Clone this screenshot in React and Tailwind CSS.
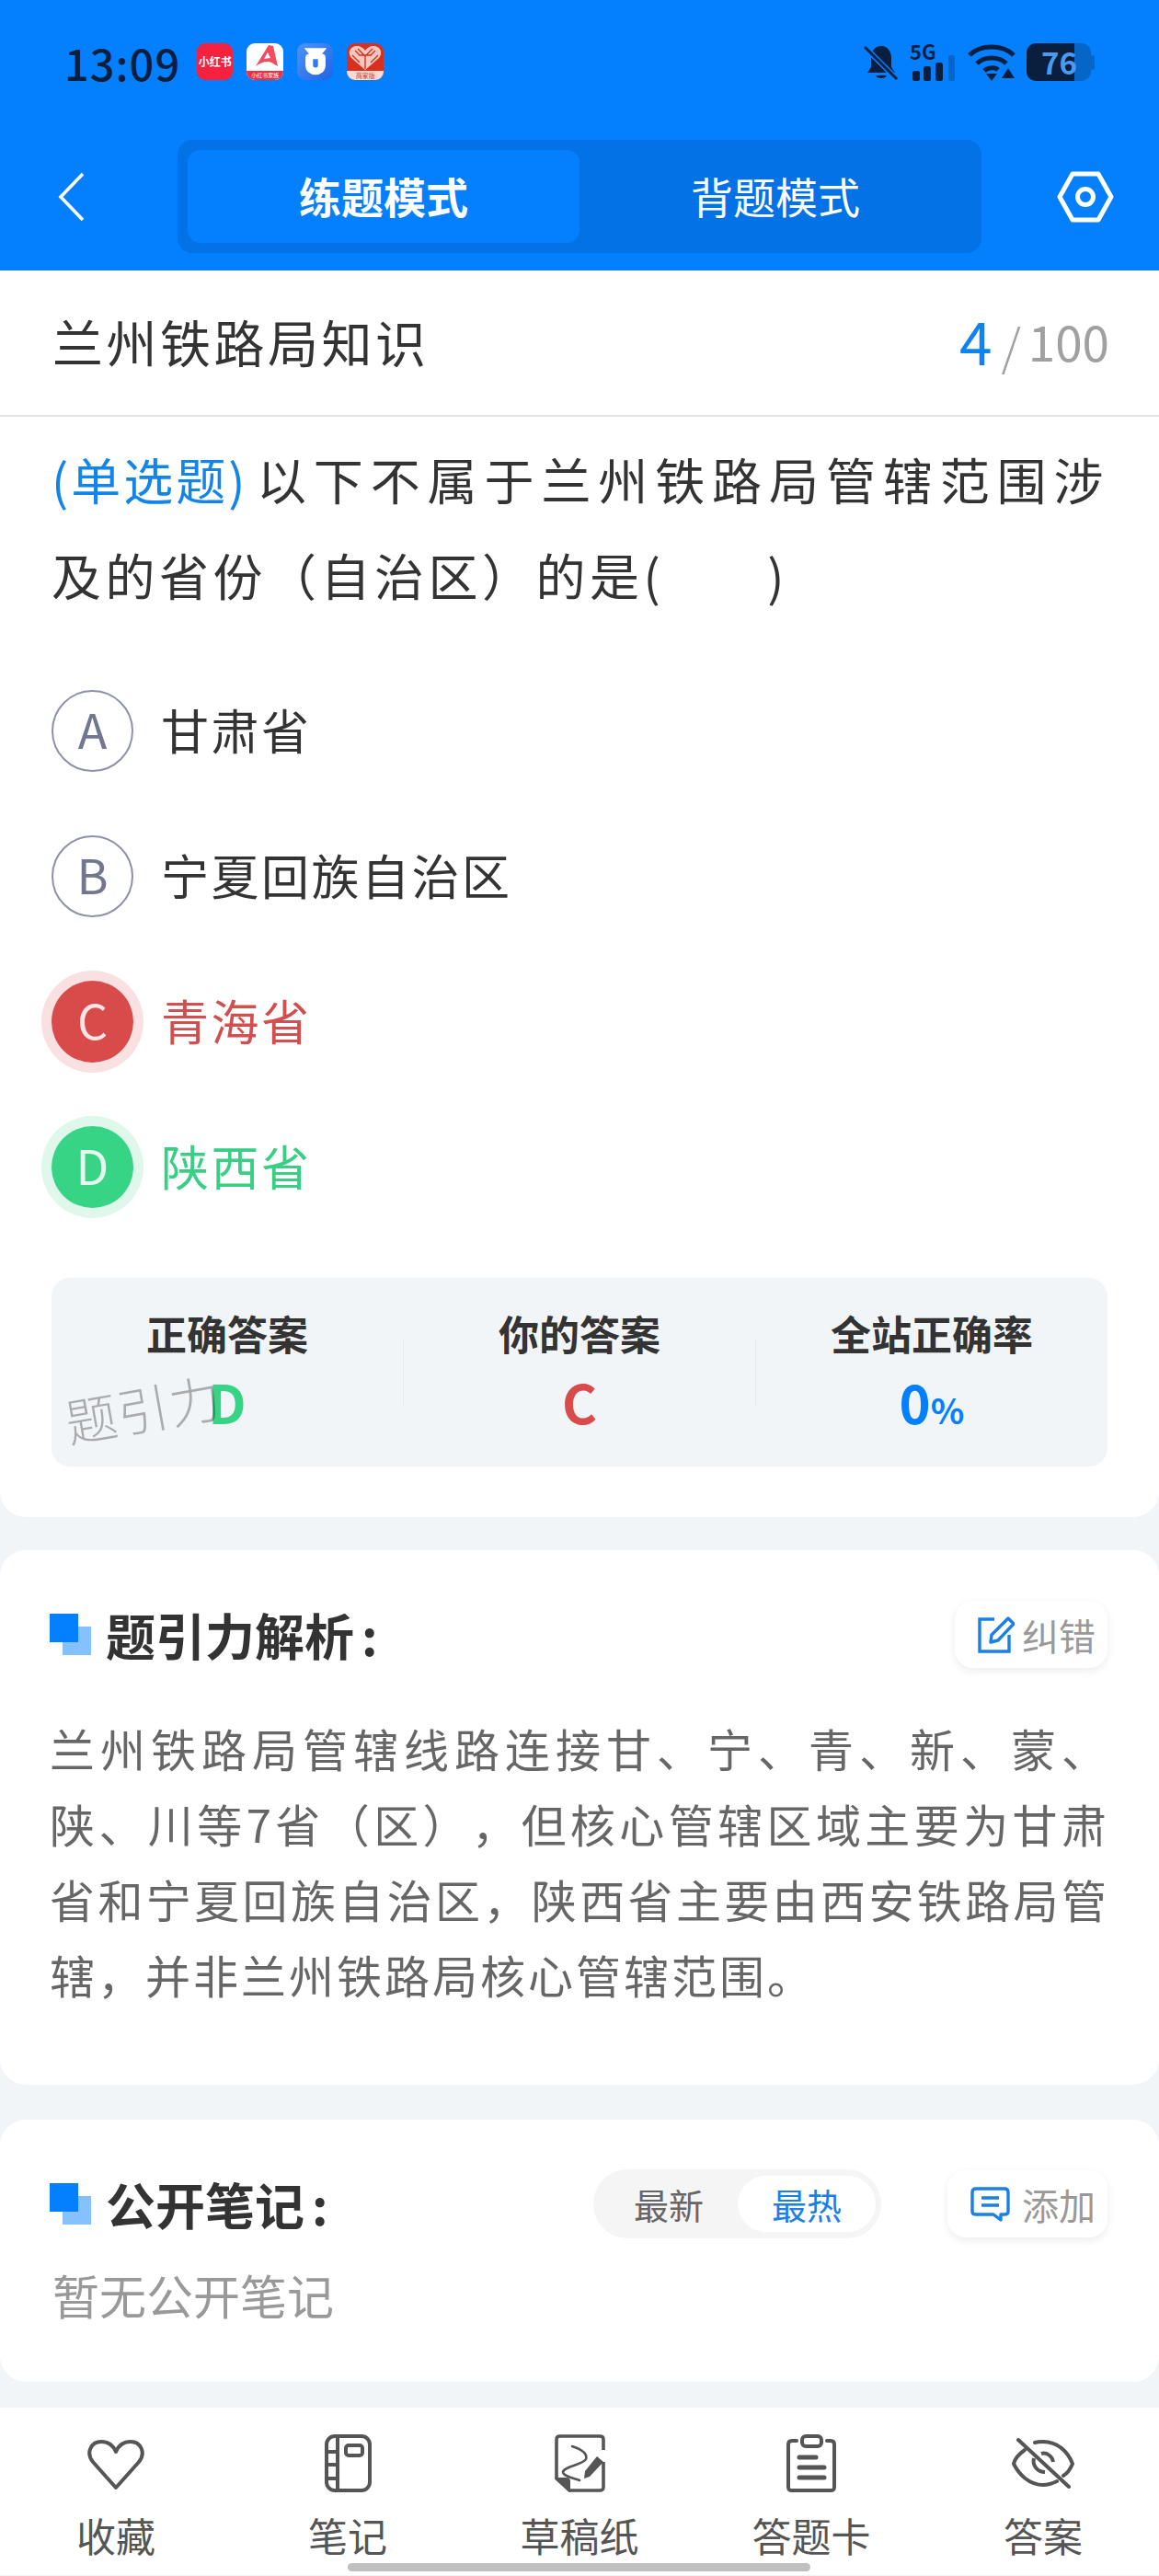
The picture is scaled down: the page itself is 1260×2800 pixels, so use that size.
import { clsx } from 'clsx';

const DARK = '#0a1f3d';

const AppIcons = () => (
  <div className="flex gap-[15px] ml-[18px]">
    <div className="w-[39px] h-[40px] rounded-[9px] bg-[#f5213f] flex items-center justify-center text-white text-[12px] font-bold leading-none whitespace-nowrap">
      小红书
    </div>
    <div className="w-[40px] h-[40px] rounded-[9px] bg-white overflow-hidden flex flex-col">
      <svg width="40" height="30" viewBox="0 0 40 30" className="block">
        <path d="M24 2 L10 25 C14 22 18 20 23 20 C27 20 30 23 34 25 L29 3 Z M23 10 L26 16 L19 17 Z" fill="#f04d5f" fillRule="evenodd" />
      </svg>
      <div className="flex-1 bg-[#ee2f45] text-white text-[6px] leading-[10px] text-center whitespace-nowrap">小红书家族</div>
    </div>
    <div className="w-[39px] h-[40px] rounded-[9px] bg-gradient-to-br from-[#4f93f5] to-[#1f63e6] flex items-center justify-center">
      <svg width="30" height="34" viewBox="0 0 26 30">
        <path d="M3 2 L7 7 H19 L23 2 M7 8 C4 8 4 10 4 13 V18 C4 24 8 27 13 27 C18 27 22 24 22 18 V13 C22 10 22 8 19 8 Z M10 12 V19 C10 22 16 22 16 19 V12 Z" fill="#fff" fillRule="evenodd" stroke="#fff" strokeWidth="1.2" />
      </svg>
    </div>
    <div className="w-[40px] h-[40px] rounded-[9px] bg-[#d8301f] overflow-hidden flex flex-col items-center">
      <svg width="40" height="30" viewBox="0 0 40 30" className="block">
        <path d="M20 29 L5 16 C0 10 4 3 11 3 C15 3 18 5 20 8 C22 5 25 3 29 3 C36 3 40 10 35 16 Z" fill="#f6c9c0" />
        <path d="M12 6 L20 14 L28 6 M6 13 L14 21 M34 13 L26 21 M20 14 V28 M13 13 H27 M9 8 L14 13 M31 8 L26 13" stroke="#d8301f" strokeWidth="1.4" fill="none" />
      </svg>
      <div className="flex-1 w-full bg-[#fbdcd5] text-[#d8301f] text-[7px] leading-[10px] text-center whitespace-nowrap">商家版</div>
    </div>
  </div>
);

const StatusRight = () => (
  <div className="flex items-center ml-auto mr-[70px] h-[41px]">
    <svg width="38" height="41" viewBox="0 0 38 41">
      <path d="M19 3 C26 3 30 9 30 16 V26 L34 32 H4 L8 26 V16 C8 9 12 3 19 3 Z" fill={DARK} />
      <path d="M13 35 H25 C24 39 14 39 13 35 Z" fill={DARK} />
      <path d="M2 5 L36 39" stroke="#0480ff" strokeWidth="6" />
      <path d="M1 4 L36 39" stroke={DARK} strokeWidth="3" />
    </svg>
    <div className="relative w-[50px] h-[41px] ml-[12px]">
      <span className="absolute left-0 top-[-7px] text-[22px] font-bold leading-[30px] text-[#0a1f3d]">5G</span>
      <svg width="50" height="41" viewBox="0 0 50 41" className="block">
        <rect x="3" y="30" width="8" height="11" rx="2.5" fill={DARK} />
        <rect x="15" y="25" width="8" height="16" rx="2.5" fill={DARK} />
        <rect x="28" y="21" width="8" height="20" rx="2.5" fill={DARK} />
        <rect x="42" y="13" width="7" height="28" rx="2.5" fill="#0566c8" />
      </svg>
    </div>
    <svg width="52" height="41" viewBox="0 0 52 41" className="ml-[13px]">
      <path d="M2 13 C14 1 38 1 50 13" stroke={DARK} strokeWidth="5" fill="none" />
      <path d="M10 22 C18 14 34 14 42 22" stroke={DARK} strokeWidth="5" fill="none" />
      <path d="M18 30 C22 26 30 26 33 29" stroke={DARK} strokeWidth="5" fill="none" />
      <path d="M26 41 L20 33 H32 Z" fill={DARK} />
      <path d="M44 27 L51 38 H37 Z" fill={DARK} />
    </svg>
    <div className="flex items-center ml-[12px]">
      <div className="relative flex w-[70px] h-[41px] rounded-[10px] bg-[#0566c8]">
        <div className="w-[52px] rounded-l-[10px] bg-[#0a1f3d]" />
        <span className="absolute left-[16px] top-0 text-[33px] font-bold leading-[41px] text-[#4a9bf0]">76</span>
      </div>
      <div className="w-[4px] h-[16px] rounded-r-[3px] bg-[#0566c8]" />
    </div>
  </div>
);

const Header = () => (
  <header className="bg-[#0480ff] h-[294px] flex flex-col">
    <div className="h-[152px] flex items-start pt-[47px]">
      <span className="ml-[70px] text-[47px] font-medium leading-[41px] text-[#0a1f3d] tracking-[1px]">13:09</span>
      <AppIcons />
      <StatusRight />
    </div>
    <div className="flex items-center h-[123px]">
      <svg width="30" height="54" viewBox="0 0 30 54" className="ml-[63px]">
        <path d="M27 2 L3 27 L27 52" stroke="#fff" strokeWidth="3.6" fill="none" />
      </svg>
      <div className="ml-[100px] w-[874px] h-[123px] rounded-[16px] bg-[#0272e6] p-[11px] flex">
        <div className="flex-1 rounded-[14px] bg-[#0480ff] flex items-center justify-center text-white text-[46px] font-bold pb-[3px]">练题模式</div>
        <div className="flex-1 flex items-center justify-center text-white text-[46px] pb-[3px]">背题模式</div>
      </div>
      <svg width="62" height="56" viewBox="0 0 62 56" className="ml-[82px]">
        <path d="M17 3 H45 L59 28 L45 53 H17 L3 28 Z" stroke="#fff" strokeWidth="5" fill="none" strokeLinejoin="round" />
        <circle cx="31" cy="28" r="8.5" stroke="#fff" strokeWidth="5" fill="none" />
      </svg>
    </div>
  </header>
);

const options = [
  { key: 'A', text: '甘肃省', state: 'idle' },
  { key: 'B', text: '宁夏回族自治区', state: 'idle' },
  { key: 'C', text: '青海省', state: 'wrong' },
  { key: 'D', text: '陕西省', state: 'right' },
];

const Option = ({ item }) => (
  <div className="h-[158px] flex items-center">
    <div
      className={clsx(
        'w-[89px] h-[89px] rounded-full flex items-center justify-center text-[52px] leading-none pb-[5px]',
        item.state === 'idle' && 'border-2 border-[#8d92a8] text-[#70778f]',
        item.state === 'wrong' && 'bg-[#d94b4b] text-[#fde4e4] ring-[11px] ring-[#fae1e1]',
        item.state === 'right' && 'bg-[#36d484] text-[#e2fbee] ring-[11px] ring-[#e0f8ec]'
      )}
    >
      {item.key}
    </div>
    <span
      className={clsx(
        'ml-[30px] text-[52px] tracking-[2.5px] pb-[3px]',
        item.state === 'idle' && 'text-[#333]',
        item.state === 'wrong' && 'text-[#d14f4f]',
        item.state === 'right' && 'text-[#38cf85]'
      )}
    >
      {item.text}
    </span>
  </div>
);

const Stat = ({ label, children }) => (
  <div className="flex-1 flex flex-col items-center pt-[31px]">
    <div className="text-[44px] leading-[58px] font-bold text-[#333]">{label}</div>
    <div className="mt-[10px] text-[58px] leading-[70px] font-bold">{children}</div>
  </div>
);

const StatDivider = () => <div className="w-px h-[72px] mt-[67px] bg-[#e6e9ec]" />;

const QuestionCard = () => (
  <section className="bg-white rounded-b-[28px] pb-[55px]">
    <div className="h-[159px] pl-[57px] pr-[54px] pb-[5px] flex items-center justify-between border-b-2 border-[#e3e3e3]">
      <span className="text-[55px] tracking-[3.5px] text-[#333]">兰州铁路局知识</span>
      <span className="flex items-end mb-[3px]">
        <span className="text-[64px] text-[#0d84f0] leading-none">4</span>
        <span className="ml-[10px] text-[54px] font-light text-[#a0a0a0] leading-none">/</span>
        <span className="ml-[8px] mb-[4px] text-[53px] text-[#a0a0a0] leading-none">100</span>
      </span>
    </div>
    <div className="px-[56px] pt-[16px]">
      <p className="text-[54px] leading-[104px] tracking-[4.5px] text-[#333] text-justify">
        <span className="inline-block text-[#1284ea] tracking-[3px] mr-[6px]">(单选题)</span>以下不属于兰州铁路局管辖范围涉及的省份（自治区）的是(
        <span className="inline-block w-[112px]" />)
      </p>
      <div className="mt-[38px]">
        {options.map((item) => (
          <Option key={item.key} item={item} />
        ))}
      </div>
      <div className="relative mt-[42px] h-[205px] bg-[#f2f5f8] rounded-[20px] flex">
        <Stat label="正确答案">
          <span className="text-[#36d484]">D</span>
        </Stat>
        <StatDivider />
        <Stat label="你的答案">
          <span className="text-[#d94b4b]">C</span>
        </Stat>
        <StatDivider />
        <Stat label="全站正确率">
          <span className="text-[#0480ff]">0</span>
          <span className="text-[#0480ff] text-[38px]">%</span>
        </Stat>
        <span className="absolute left-[14px] top-[106px] text-[56px] leading-[70px] font-light text-black/30 tracking-[1px] -rotate-[10deg] whitespace-nowrap">
          题引力
        </span>
      </div>
    </div>
  </section>
);

const HeadingIcon = () => (
  <svg width="45" height="45" viewBox="0 0 45 45" className="shrink-0">
    <rect x="14" y="14" width="31" height="31" fill="#86c1ff" />
    <rect x="0" y="0" width="31" height="31" fill="#0480ff" />
  </svg>
);

const Heading = ({ children }) => (
  <div className="flex items-center gap-[16px]">
    <HeadingIcon />
    <span className="text-[54px] leading-[60px] font-bold text-[#333]">
      {children}
      <span className="ml-[8px]">:</span>
    </span>
  </div>
);

const EditIcon = () => (
  <svg width="40" height="40" viewBox="0 0 40 40">
    <path d="M18 3 H2 V38 H34 V20" stroke="#1a80e5" strokeWidth="3.4" fill="none" />
    <path d="M33 2 L39 8 L22 26 L14 28 L15 20 Z" stroke="#1a80e5" strokeWidth="3.4" fill="none" strokeLinejoin="round" />
  </svg>
);

const CommentIcon = () => (
  <svg width="43" height="38" viewBox="0 0 43 38">
    <path d="M6 2 H37 C40 2 41 4 41 6 V27 C41 29 40 30 37 30 H33 L33 36 L25 30 H6 C3 30 2 29 2 27 V6 C2 4 3 2 6 2 Z" stroke="#1a80e5" strokeWidth="3.4" fill="none" strokeLinejoin="round" />
    <path d="M12 12 H31 M12 20 H31" stroke="#1a80e5" strokeWidth="3.4" />
  </svg>
);

const ActionButton = ({ icon, label, className }) => (
  <div className={clsx('h-[73px] rounded-[20px] bg-white shadow-[0_3px_10px_rgba(0,0,0,0.08)] flex items-center pl-[25px]', className)}>
    {icon}
    <span className="text-[40px] leading-[50px] text-[#999] whitespace-nowrap ml-auto pr-[13px]">{label}</span>
  </div>
);

const AnalysisCard = () => (
  <section className="mt-[36px] bg-white rounded-[28px] px-[54px] pt-[55px] pb-[79px]">
    <div className="flex items-center justify-between pr-[2px]">
      <Heading>题引力解析</Heading>
      <ActionButton icon={<EditIcon />} label="纠错" className="w-[166px]" />
    </div>
    <p className="mt-[46px] text-[49px] leading-[82px] tracking-[3px] text-[#666] text-justify [text-spacing-trim:space-all]">
      兰州铁路局管辖线路连接甘、宁、青、新、蒙、陕、川等7省（区），但核心管辖区域主要为甘肃省和宁夏回族自治区，陕西省主要由西安铁路局管辖，并非兰州铁路局核心管辖范围。
    </p>
  </section>
);

const NotesCard = () => (
  <section className="mt-[38px] bg-white rounded-[28px] px-[54px] pt-[54px] pb-[65px]">
    <div className="flex items-center pr-[2px]">
      <Heading>公开笔记</Heading>
      <div className="ml-auto w-[313px] h-[75px] rounded-full bg-[#f5f5f5] flex items-center pl-[44px] pr-[6px]">
        <span className="text-[38px] text-[#666]">最新</span>
        <span className="ml-auto w-[150px] h-[61px] rounded-full bg-white flex items-center justify-center text-[38px] text-[#1a80e5]">最热</span>
      </div>
      <div className="ml-[72px]">
        <ActionButton icon={<CommentIcon />} label="添加" className="w-[174px]" />
      </div>
    </div>
    <p className="mt-[31px] pl-[3px] text-[51px] leading-[60px] text-[#999]">暂无公开笔记</p>
  </section>
);

const HeartIcon = () => (
  <svg width="64" height="56" viewBox="0 0 64 56" className="mt-[3px]">
    <path d="M32 53 L7 25 C-1 15 5 3 16 3 C23 3 29 7 32 14 C35 7 41 3 48 3 C59 3 65 15 57 25 Z" stroke="#555" strokeWidth="4" fill="none" strokeLinejoin="round" />
  </svg>
);

const NotebookIcon = () => (
  <svg width="51" height="63" viewBox="0 0 51 63">
    <rect x="2" y="2" width="47" height="59" rx="9" stroke="#555" strokeWidth="4" fill="none" />
    <path d="M14 2 V61 M2 19 H14 M2 33 H14 M2 48 H14" stroke="#555" strokeWidth="4" />
    <rect x="23" y="12" width="18" height="11" rx="3" stroke="#555" strokeWidth="4" fill="none" />
  </svg>
);

const DraftIcon = () => (
  <svg width="55" height="63" viewBox="0 0 55 63">
    <path d="M53 17 V6 C53 3 52 2 49 2 H6 C3 2 2 3 2 6 V48 L16 61 H49 C52 61 53 60 53 57 V30" stroke="#555" strokeWidth="3.6" fill="none" />
    <path d="M2 48 H13 C15 48 16 49 16 51 V61 Z" fill="#555" stroke="#555" strokeWidth="2" />
    <path d="M19 13 C28 16 36 21 34 27 C31 33 10 35 9 41 C9 45 18 47 27 50" stroke="#555" strokeWidth="2.6" fill="none" strokeLinecap="round" />
    <path d="M46 24 L53 30 L38 46 L32 48 L33 40 Z" fill="#555" />
  </svg>
);

const ClipboardIcon = () => (
  <svg width="54" height="63" viewBox="0 0 54 63">
    <path d="M11 7 H6 C3 7 2 9 2 11 V57 C2 60 3 61 6 61 H48 C51 61 52 60 52 57 V11 C52 9 51 7 48 7 H44" stroke="#555" strokeWidth="4" fill="none" strokeLinecap="round" />
    <rect x="17" y="2" width="21" height="11" rx="4" stroke="#555" strokeWidth="4" fill="none" />
    <path d="M14 25 H32 M14 36 H41 M14 47 H41" stroke="#555" strokeWidth="5" strokeLinecap="round" />
  </svg>
);

const EyeOffIcon = () => (
  <svg width="68" height="55" viewBox="0 0 68 55">
    <path d="M14 13 C7 18 3 23 2 28 C8 40 19 51 34 51 C40 51 45 49 49 47 M25 5 C28 4 31 4 34 4 C50 4 61 15 66 28 C64 33 61 38 56 41" stroke="#555" strokeWidth="4" fill="none" strokeLinecap="round" />
    <path d="M7 2 L62 53" stroke="#555" strokeWidth="4" strokeLinecap="round" />
    <path d="M32 17 C38 15 44 20 45 26 M24 22 C22 30 28 37 36 37" stroke="#555" strokeWidth="4" fill="none" />
  </svg>
);

const navItems = [
  { name: '收藏', icon: HeartIcon },
  { name: '笔记', icon: NotebookIcon },
  { name: '草稿纸', icon: DraftIcon },
  { name: '答题卡', icon: ClipboardIcon },
  { name: '答案', icon: EyeOffIcon },
];

const BottomNav = () => (
  <nav className="relative mt-[28px] h-[182px] bg-white grid grid-cols-5">
    {navItems.map((item) => (
      <div key={item.name} className="flex flex-col items-center pt-[29px]">
        <div className="h-[63px] flex items-center justify-center">
          <item.icon />
        </div>
        <span className="mt-[21px] text-[43px] leading-[50px] text-[#555]">{item.name}</span>
      </div>
    ))}
    <div className="absolute left-[378px] top-[169px] w-[503px] h-[9px] rounded-full bg-[#bfbfbf]" />
  </nav>
);

export default function App() {
  return (
    <div className="w-[1260px] h-[2800px] overflow-hidden bg-[#f2f5f8] font-['Noto_Sans_CJK_SC','Noto_Sans',sans-serif]">
      <Header />
      <QuestionCard />
      <AnalysisCard />
      <NotesCard />
      <BottomNav />
    </div>
  );
}
